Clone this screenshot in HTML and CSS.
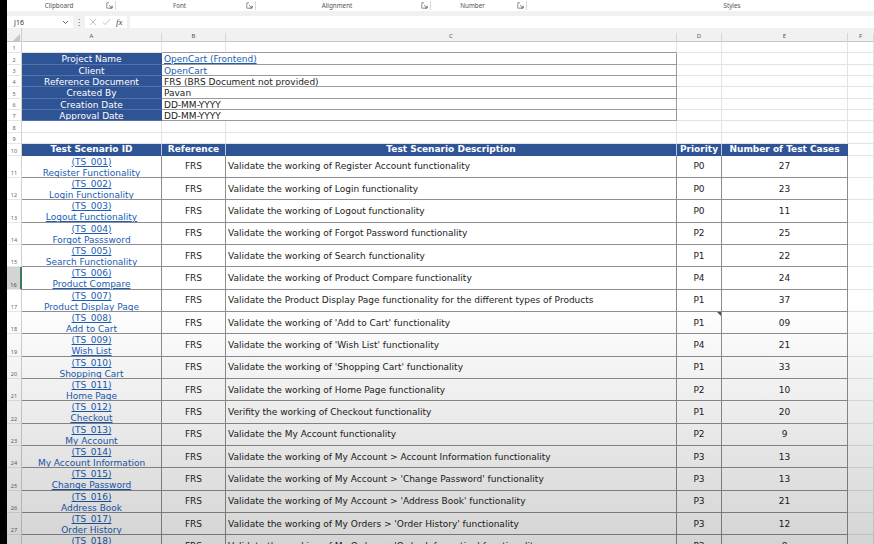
FILE: index.html
```html
<!DOCTYPE html>
<html>
<head>
<meta charset="utf-8">
<link rel="stylesheet" href="styles.css">
</head>
<body>
<div class="app">
  <div class="ribbon">
    <div class="grp g-clip"><span class="glabel">Clipboard</span><span class="launch"><svg width="7" height="7" viewBox="0 0 7 7"><path d="M3 .8H.8v5.4h5.4V4" fill="none" stroke="#777" stroke-width=".8"/><path d="M3 3l3 3M6 3.6V6H3.6" fill="none" stroke="#777" stroke-width=".8"/></svg></span></div>
    <div class="grp g-font"><span class="glabel">Font</span><span class="launch"><svg width="7" height="7" viewBox="0 0 7 7"><path d="M3 .8H.8v5.4h5.4V4" fill="none" stroke="#777" stroke-width=".8"/><path d="M3 3l3 3M6 3.6V6H3.6" fill="none" stroke="#777" stroke-width=".8"/></svg></span></div>
    <div class="grp g-align"><span class="glabel">Alignment</span><span class="launch"><svg width="7" height="7" viewBox="0 0 7 7"><path d="M3 .8H.8v5.4h5.4V4" fill="none" stroke="#777" stroke-width=".8"/><path d="M3 3l3 3M6 3.6V6H3.6" fill="none" stroke="#777" stroke-width=".8"/></svg></span></div>
    <div class="grp g-num"><span class="glabel">Number</span><span class="launch"><svg width="7" height="7" viewBox="0 0 7 7"><path d="M3 .8H.8v5.4h5.4V4" fill="none" stroke="#777" stroke-width=".8"/><path d="M3 3l3 3M6 3.6V6H3.6" fill="none" stroke="#777" stroke-width=".8"/></svg></span></div>
    <div class="grp g-styles"><span class="glabel">Styles</span></div>
  </div>

  <div class="fbar">
    <div class="namebox"><span class="nbtext">J16</span><svg class="chev" width="7" height="5" viewBox="0 0 7 5"><path d="M1 1l2.5 2.5L6 1" fill="none" stroke="#555" stroke-width=".9"/></svg></div>
    <div class="fdots">&#8942;</div>
    <div class="fbtns">
      <svg width="8" height="8" viewBox="0 0 8 8"><path d="M1 1l6 6M7 1L1 7" stroke="#bdbdbd" stroke-width=".9"/></svg>
      <svg width="9" height="8" viewBox="0 0 9 8"><path d="M1 4.2l2.3 2.4L8 1.2" fill="none" stroke="#bdbdbd" stroke-width=".9"/></svg>
      <span class="fx">fx</span>
    </div>
    <div class="finput"></div>
  </div>

  <div class="colhdr">
    <div class="corner"><svg width="7" height="7" viewBox="0 0 7 7"><path d="M7 0v7H0z" fill="#c4c4c4"/></svg></div>
    <div class="ch">A</div><div class="ch">B</div><div class="ch">C</div><div class="ch">D</div><div class="ch">E</div><div class="ch">F</div>
  </div>

  <div class="sheet">
    <div class="row s"><div class="rn">1</div><div class="c"></div><div class="c bt"></div><div class="c bt"></div><div class="c"></div><div class="c"></div><div class="c"></div></div>
    <div class="row s"><div class="rn">2</div><div class="c hb">Project Name</div><div class="c val span2"><span class="lnk">OpenCart (Frontend)</span></div><div class="c"></div><div class="c"></div><div class="c"></div></div>
    <div class="row s"><div class="rn">3</div><div class="c hb">Client</div><div class="c val span2"><span class="lnk">OpenCart</span></div><div class="c"></div><div class="c"></div><div class="c"></div></div>
    <div class="row s"><div class="rn">4</div><div class="c hb">Reference Document</div><div class="c val span2">FRS (BRS Document not provided)</div><div class="c"></div><div class="c"></div><div class="c"></div></div>
    <div class="row s"><div class="rn">5</div><div class="c hb">Created By</div><div class="c val span2">Pavan</div><div class="c"></div><div class="c"></div><div class="c"></div></div>
    <div class="row s"><div class="rn">6</div><div class="c hb">Creation Date</div><div class="c val span2">DD-MM-YYYY</div><div class="c"></div><div class="c"></div><div class="c"></div></div>
    <div class="row s"><div class="rn">7</div><div class="c hb">Approval Date</div><div class="c val span2">DD-MM-YYYY</div><div class="c"></div><div class="c"></div><div class="c"></div></div>
    <div class="row s"><div class="rn">8</div><div class="c"></div><div class="c"></div><div class="c"></div><div class="c"></div><div class="c"></div><div class="c"></div></div>
    <div class="row s"><div class="rn">9</div><div class="c"></div><div class="c"></div><div class="c"></div><div class="c"></div><div class="c"></div><div class="c"></div></div>

    <div class="row h"><div class="rn">10</div><div class="c th">Test Scenario ID</div><div class="c th">Reference</div><div class="c th">Test Scenario Description</div><div class="c th">Priority</div><div class="c th">Number of Test Cases</div><div class="c"></div></div>

    <div class="row d"><div class="rn">11</div><div class="c td id"><span class="lnk">(TS_001)</span><span class="lnk">Register Functionality</span></div><div class="c td ctr">FRS</div><div class="c td desc">Validate the working of Register Account functionality</div><div class="c td ctr">P0</div><div class="c td ctr">27</div><div class="c"></div></div>
    <div class="row d"><div class="rn">12</div><div class="c td id"><span class="lnk">(TS_002) </span><span class="lnk">Login Functionality</span></div><div class="c td ctr">FRS</div><div class="c td desc">Validate the working of Login functionality</div><div class="c td ctr">P0</div><div class="c td ctr">23</div><div class="c"></div></div>
    <div class="row d"><div class="rn">13</div><div class="c td id"><span class="lnk">(TS_003)</span><span class="lnk">Logout Functionality</span></div><div class="c td ctr">FRS</div><div class="c td desc">Validate the working of Logout functionality</div><div class="c td ctr">P0</div><div class="c td ctr">11</div><div class="c"></div></div>
    <div class="row d"><div class="rn">14</div><div class="c td id"><span class="lnk">(TS_004)</span><span class="lnk">Forgot Passsword</span></div><div class="c td ctr">FRS</div><div class="c td desc">Validate the working of Forgot Password functionality</div><div class="c td ctr">P2</div><div class="c td ctr">25</div><div class="c"></div></div>
    <div class="row d"><div class="rn">15</div><div class="c td id"><span class="lnk">(TS_005)</span><span class="lnk">Search Functionality</span></div><div class="c td ctr">FRS</div><div class="c td desc">Validate the working of Search functionality</div><div class="c td ctr">P1</div><div class="c td ctr">22</div><div class="c"></div></div>
    <div class="row d"><div class="rn sel">16</div><div class="c td id"><span class="lnk">(TS_006)</span><span class="lnk">Product Compare</span></div><div class="c td ctr">FRS</div><div class="c td desc">Validate the working of Product Compare functionality</div><div class="c td ctr">P4</div><div class="c td ctr">24</div><div class="c"></div></div>
    <div class="row d"><div class="rn">17</div><div class="c td id"><span class="lnk">(TS_007)</span><span class="lnk">Product Display Page</span></div><div class="c td ctr">FRS</div><div class="c td desc">Validate the Product Display Page functionality for the different types of Products</div><div class="c td ctr">P1</div><div class="c td ctr">37</div><div class="c"></div></div>
    <div class="row d"><div class="rn">18</div><div class="c td id"><span class="lnk">(TS_008)</span><span class="lnk">Add to Cart</span></div><div class="c td ctr">FRS</div><div class="c td desc">Validate the working of 'Add to Cart' functionality</div><div class="c td ctr note">P1</div><div class="c td ctr">09</div><div class="c"></div></div>
    <div class="row d"><div class="rn">19</div><div class="c td id"><span class="lnk">(TS_009)</span><span class="lnk">Wish List</span></div><div class="c td ctr">FRS</div><div class="c td desc">Validate the working of 'Wish List' functionality</div><div class="c td ctr">P4</div><div class="c td ctr">21</div><div class="c"></div></div>
    <div class="row d"><div class="rn">20</div><div class="c td id"><span class="lnk">(TS_010)</span><span class="lnk">Shopping Cart</span></div><div class="c td ctr">FRS</div><div class="c td desc">Validate the working of 'Shopping Cart' functionality</div><div class="c td ctr">P1</div><div class="c td ctr">33</div><div class="c"></div></div>
    <div class="row d"><div class="rn">21</div><div class="c td id"><span class="lnk">(TS_011)</span><span class="lnk">Home Page</span></div><div class="c td ctr">FRS</div><div class="c td desc">Validate the working of Home Page functionality</div><div class="c td ctr">P2</div><div class="c td ctr">10</div><div class="c"></div></div>
    <div class="row d"><div class="rn">22</div><div class="c td id"><span class="lnk">(TS_012)</span><span class="lnk">Checkout</span></div><div class="c td ctr">FRS</div><div class="c td desc">Verifity the working of Checkout functionality</div><div class="c td ctr">P1</div><div class="c td ctr">20</div><div class="c"></div></div>
    <div class="row d"><div class="rn">23</div><div class="c td id"><span class="lnk">(TS_013)</span><span class="lnk">My Account</span></div><div class="c td ctr">FRS</div><div class="c td desc">Validate the My Account functionality</div><div class="c td ctr">P2</div><div class="c td ctr">9</div><div class="c"></div></div>
    <div class="row d"><div class="rn">24</div><div class="c td id"><span class="lnk">(TS_014)</span><span class="lnk">My Account Information</span></div><div class="c td ctr">FRS</div><div class="c td desc">Validate the working of My Account &gt; Account Information functionality</div><div class="c td ctr">P3</div><div class="c td ctr">13</div><div class="c"></div></div>
    <div class="row d"><div class="rn">25</div><div class="c td id"><span class="lnk">(TS_015)</span><span class="lnk">Change Password</span></div><div class="c td ctr">FRS</div><div class="c td desc">Validate the working of My Account &gt; 'Change Password' functionality</div><div class="c td ctr">P3</div><div class="c td ctr">13</div><div class="c"></div></div>
    <div class="row d"><div class="rn">26</div><div class="c td id"><span class="lnk">(TS_016)</span><span class="lnk">Address Book</span></div><div class="c td ctr">FRS</div><div class="c td desc">Validate the working of My Account &gt; 'Address Book' functionality</div><div class="c td ctr">P3</div><div class="c td ctr">21</div><div class="c"></div></div>
    <div class="row d"><div class="rn">27</div><div class="c td id"><span class="lnk">(TS_017)</span><span class="lnk">Order History</span></div><div class="c td ctr">FRS</div><div class="c td desc">Validate the working of My Orders &gt; 'Order History' functionality</div><div class="c td ctr">P3</div><div class="c td ctr">12</div><div class="c"></div></div>
    <div class="row d"><div class="rn">28</div><div class="c td id"><span class="lnk">(TS_018)</span><span class="lnk">Order Information</span></div><div class="c td ctr">FRS</div><div class="c td desc">Validate the working of My Orders &gt; 'Order Information' functionality</div><div class="c td ctr">P3</div><div class="c td ctr">8</div><div class="c"></div></div>
  </div>

  <div class="shade"></div>
</div>
</body>
</html>
```

FILE: styles.css
```css
* { box-sizing: border-box; margin: 0; padding: 0; }
html, body { width: 874px; height: 544px; overflow: hidden; }
body { background: #000; font-family: "DejaVu Sans", Verdana, sans-serif; }

.app {
  position: relative;
  margin-left: 7px;
  height: 544px;
  background: #fff;
  overflow: hidden;
}

/* Ribbon group labels */
.ribbon {
  display: flex;
  height: 11px;
  background: #fff;
  font-family: "Noto Sans", sans-serif;
  font-size: 6.3px;
  color: #555;
}
.grp {
  flex-shrink: 0;
  display: flex;
  align-items: center;
  height: 9px;
  margin-top: 1px;
  border-right: 1px solid #d8d8d8;
}
.g-clip { width: 109px; }
.g-font { width: 140px; }
.g-align { width: 175px; }
.g-num { width: 96px; }
.g-styles { width: 410px; border-right: 0; }
.g-clip .glabel { padding-left: 8px; }
.glabel { flex: 1; text-align: center; line-height: 9px; }
.launch { width: 12px; display: flex; justify-content: center; align-items: center; }

/* Formula bar */
.fbar {
  display: flex;
  height: 17px;
  padding-top: 5px;
  background: #f1f1f1;
}
.namebox {
  width: 66px;
  height: 12px;
  background: #fff;
  display: flex;
  align-items: center;
  padding-left: 7px;
  font-family: "Noto Sans", sans-serif;
  font-size: 7px;
  color: #333;
}
.nbtext { flex: 1; }
.chev { margin-right: 4px; }
.fdots {
  width: 12px;
  height: 12px;
  display: flex;
  align-items: center;
  justify-content: center;
  font-size: 8px;
  color: #555;
}
.fbtns {
  width: 42px;
  height: 12px;
  background: #fff;
  display: flex;
  align-items: center;
  justify-content: space-around;
  padding: 0 2px;
}
.fx {
  font-family: "Liberation Serif", serif;
  font-style: italic;
  font-size: 9px;
  color: #444;
}
.finput { flex: 1; height: 12px; margin-left: 3px; background: #fff; }

/* Column headers */
.colhdr {
  display: grid;
  grid-template-columns: 15px 140px 64px 451px 45px 126px 1fr;
  height: 14px;
  background: #f1f1f1;
  border-bottom: 1px solid #c6c6c6;
}
.corner {
  display: flex;
  align-items: flex-end;
  justify-content: flex-end;
  padding: 0 1px 1px 0;
  border-right: 1px solid #d0d0d0;
}
.ch {
  font-family: "Noto Sans", sans-serif;
  font-size: 6px;
  color: #555;
  display: flex;
  align-items: flex-end;
  justify-content: center;
  padding-bottom: 2px;
  line-height: 7px;
  border-right: 1px solid #d6d6d6;
  margin-top: 5px;
}

/* Sheet grid */
.row {
  display: grid;
  grid-template-columns: 15px 140px 64px 451px 45px 126px 1fr;
}
.s { height: 11.33px; }
.h { height: 11.7px; }
.d { height: 22.35px; }

.rn {
  font-family: "Noto Sans", sans-serif;
  font-size: 5.5px;
  line-height: 7px;
  color: #666;
  background: #fff;
  border-right: 1px solid #d0d0d0;
  border-bottom: 1px solid #e6e6e6;
  display: flex;
  align-items: flex-end;
  justify-content: center;
}
.rn.sel {
  background: #d4d4d4;
  border-right: 2px solid #3a7d57;
  color: #444;
}

.c {
  border-right: 1px solid #e3e3e3;
  border-bottom: 1px solid #e3e3e3;
  font-size: 9px;
  line-height: 10px;
  color: #222;
  white-space: nowrap;
  overflow: hidden;
}
.c.bt { border-bottom-color: #9a9a9a; }
.span2 { grid-column: span 2; }

.hb {
  background: #2f5496;
  color: #fff;
  text-align: center;
  padding-top: 1px;
  border-right-color: #2f5496;
  border-bottom-color: #5572a8;
}
.val {
  padding-left: 2px;
  padding-top: 1px;
  border-right-color: #9a9a9a;
  border-bottom-color: #9a9a9a;
}
.lnk { color: #1a5db3; text-decoration: underline; text-underline-offset: 1px; }

.th {
  background: #2f5496;
  color: #fff;
  font-weight: bold;
  text-align: center;
  border-right-color: #b9c6df;
  border-bottom-color: #2f5496;
  line-height: 11px;
}
.th:nth-child(6) { border-right-color: #2f5496; }

.td {
  border-right-color: #8e8e8e;
  border-bottom-color: #8e8e8e;
  display: flex;
  align-items: center;
}
.ctr { justify-content: center; }
.desc { padding-left: 2px; }
.id {
  flex-direction: column;
  align-items: center;
  justify-content: flex-start;
  line-height: 11px;
  padding-top: 1px;
}
.note { position: relative; }
.note::after {
  content: "";
  position: absolute;
  right: 0;
  top: 0;
  border-left: 4px solid transparent;
  border-top: 4px solid #3b5f4a;
}

.shade {
  position: absolute;
  inset: 0;
  pointer-events: none;
  background: linear-gradient(180deg, rgba(0,0,0,0) 0%, rgba(0,0,0,0) 56%, rgba(0,0,0,0.17) 100%);
}
```
